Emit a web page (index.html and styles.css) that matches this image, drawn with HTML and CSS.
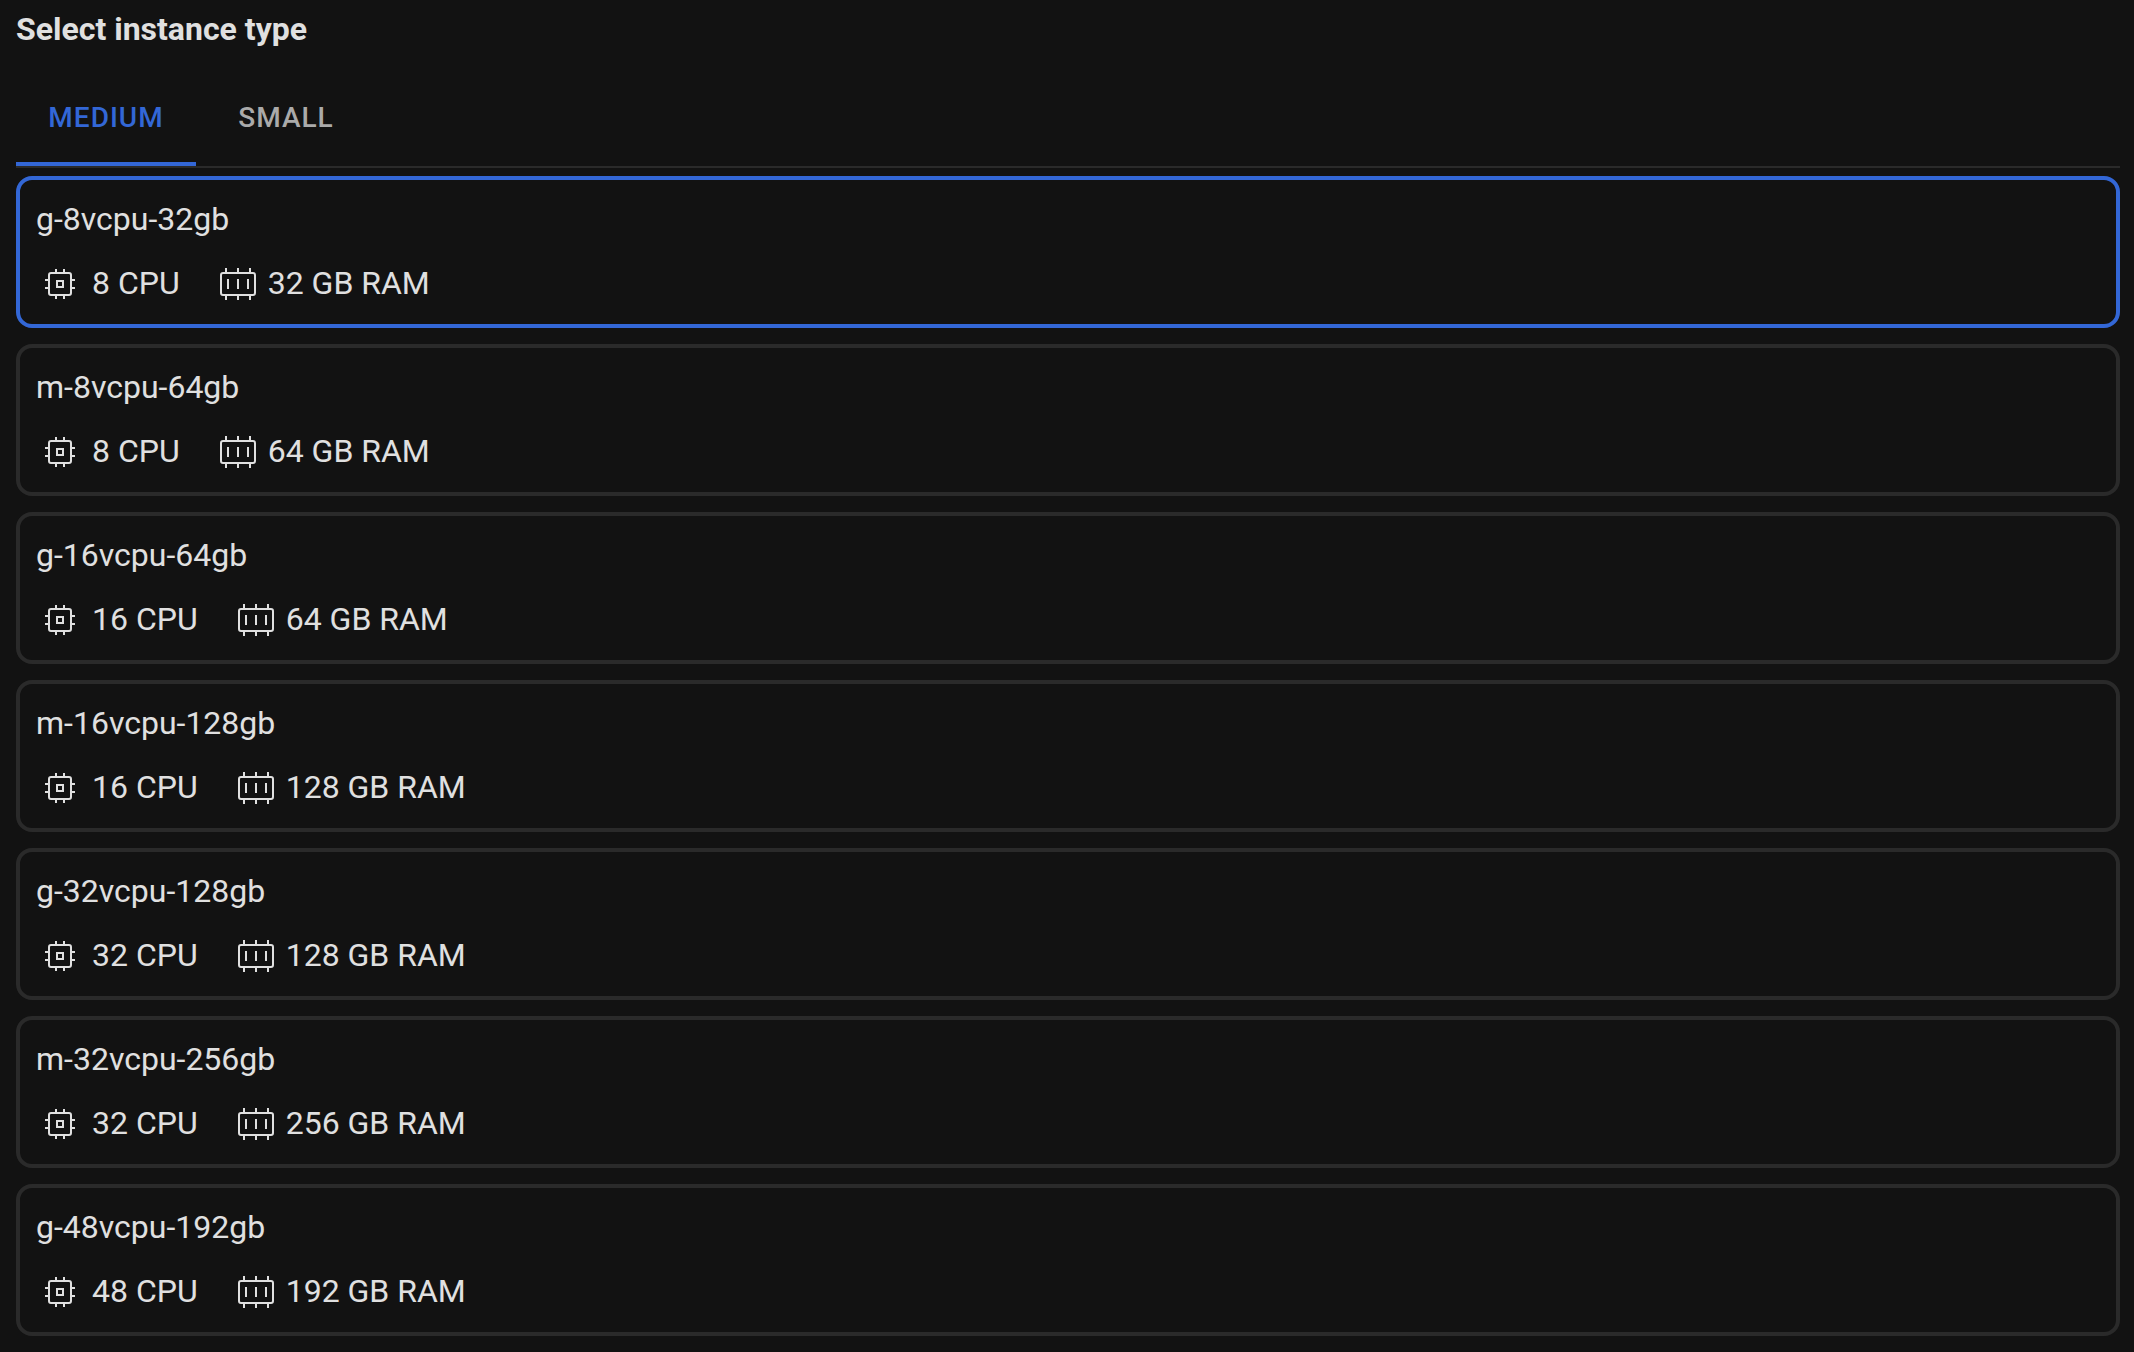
FILE: index.html
```html
<!DOCTYPE html>
<html lang="en">

<head>
  <meta charset="utf-8">
  <meta name="viewport" content="width=device-width, initial-scale=1">
  <title>Select instance type</title>
  <link rel="stylesheet" href="styles.css">
</head>

<body>

  <!-- icon sprite -->
  <svg class="sprite" aria-hidden="true">
    <symbol id="icon-cpu" viewBox="0 0 32 32">
      <rect x="5" y="5" width="22" height="22" rx="2" />
      <rect x="13" y="13" width="6" height="6" />
      <path d="M12 1v3M20 1v3M12 28v3M20 28v3M1 12h3M1 20h3M28 12h3M28 20h3" />
    </symbol>
    <symbol id="icon-ram" viewBox="0 0 36 32">
      <rect x="1" y="5" width="34" height="22" rx="2" />
      <path d="M6 0v4M18 0v4M30 0v4M6 28v4M18 28v4M30 28v4M8 11v10M18 11v10M28 11v10" />
    </symbol>
  </svg>

  <main class="picker">
    <h1 class="title" id="picker-title">Select instance type</h1>

    <div class="tabs" role="tablist">
      <button type="button" class="tab active" role="tab" id="tab-medium" aria-selected="true" aria-controls="panel">Medium</button>
      <button type="button" class="tab" role="tab" id="tab-small" aria-selected="false">Small</button>
    </div>

    <div class="instances" role="tabpanel" id="panel" aria-labelledby="tab-medium">
      <label class="instance">
        <input type="radio" name="instance" value="g-8vcpu-32gb" checked>
        <span class="name">g-8vcpu-32gb</span>
        <span class="specs">
          <span class="spec"><svg class="icon cpu"><use href="#icon-cpu" /></svg>8 CPU</span>
          <span class="spec"><svg class="icon ram"><use href="#icon-ram" /></svg>32 GB RAM</span>
        </span>
      </label>

      <label class="instance">
        <input type="radio" name="instance" value="m-8vcpu-64gb">
        <span class="name">m-8vcpu-64gb</span>
        <span class="specs">
          <span class="spec"><svg class="icon cpu"><use href="#icon-cpu" /></svg>8 CPU</span>
          <span class="spec"><svg class="icon ram"><use href="#icon-ram" /></svg>64 GB RAM</span>
        </span>
      </label>

      <label class="instance">
        <input type="radio" name="instance" value="g-16vcpu-64gb">
        <span class="name">g-16vcpu-64gb</span>
        <span class="specs">
          <span class="spec"><svg class="icon cpu"><use href="#icon-cpu" /></svg>16 CPU</span>
          <span class="spec"><svg class="icon ram"><use href="#icon-ram" /></svg>64 GB RAM</span>
        </span>
      </label>

      <label class="instance">
        <input type="radio" name="instance" value="m-16vcpu-128gb">
        <span class="name">m-16vcpu-128gb</span>
        <span class="specs">
          <span class="spec"><svg class="icon cpu"><use href="#icon-cpu" /></svg>16 CPU</span>
          <span class="spec"><svg class="icon ram"><use href="#icon-ram" /></svg>128 GB RAM</span>
        </span>
      </label>

      <label class="instance">
        <input type="radio" name="instance" value="g-32vcpu-128gb">
        <span class="name">g-32vcpu-128gb</span>
        <span class="specs">
          <span class="spec"><svg class="icon cpu"><use href="#icon-cpu" /></svg>32 CPU</span>
          <span class="spec"><svg class="icon ram"><use href="#icon-ram" /></svg>128 GB RAM</span>
        </span>
      </label>

      <label class="instance">
        <input type="radio" name="instance" value="m-32vcpu-256gb">
        <span class="name">m-32vcpu-256gb</span>
        <span class="specs">
          <span class="spec"><svg class="icon cpu"><use href="#icon-cpu" /></svg>32 CPU</span>
          <span class="spec"><svg class="icon ram"><use href="#icon-ram" /></svg>256 GB RAM</span>
        </span>
      </label>

      <label class="instance">
        <input type="radio" name="instance" value="g-48vcpu-192gb">
        <span class="name">g-48vcpu-192gb</span>
        <span class="specs">
          <span class="spec"><svg class="icon cpu"><use href="#icon-cpu" /></svg>48 CPU</span>
          <span class="spec"><svg class="icon ram"><use href="#icon-ram" /></svg>192 GB RAM</span>
        </span>
      </label>
    </div>
  </main>

</body>

</html>
```

FILE: styles.css
```css
:root {
  --background: #121212;
  --text: #e0e0e0;
  --text-muted: #aaaaaa;
  --primary: #3367d6;
  --divider: #2a2a2a;
}

* {
  box-sizing: border-box;
}

body {
  margin: 0;
  background-color: var(--background);
  color: var(--text);
  font-family: Roboto, "Liberation Sans", sans-serif;
  font-size: 32px;
  line-height: 46px;
}

.sprite {
  display: none;
}

.picker {
  padding: 6px 14px 16px 16px;
}

.title {
  margin: 0 0 18px;
  font-size: 32px;
  font-weight: 700;
}

/*********** Tabs ***********/

.tabs {
  display: flex;
  margin-bottom: 8px;
  border-bottom: 2px solid var(--divider);
}

.tab {
  min-width: 180px;
  height: 96px;
  padding: 2px 32px 0;
  border: none;
  border-bottom: 4px solid transparent;
  background: none;
  color: var(--text-muted);
  font-family: inherit;
  font-size: 28px;
  font-weight: 500;
  letter-spacing: 1px;
  text-transform: uppercase;
  cursor: pointer;
}

.tab.active {
  border-bottom-color: var(--primary);
  color: var(--primary);
}

/*********** Instance cards ***********/

.instances {
  display: flex;
  flex-direction: column;
  gap: 16px;
}

.instance {
  position: relative;
  display: flex;
  flex-direction: column;
  gap: 18px;
  padding: 16px 16px 18px;
  border: 4px solid var(--divider);
  border-radius: 16px;
  cursor: pointer;
}

.instance:has(input:checked) {
  border-color: var(--primary);
}

/* the radio covers the whole card, only the border shows its state */
.instance input {
  position: absolute;
  inset: 0;
  width: 100%;
  height: 100%;
  margin: 0;
  opacity: 0;
  cursor: pointer;
}

.specs {
  display: flex;
  gap: 40px;
  padding-left: 8px;
}

.spec {
  display: flex;
  align-items: center;
}

.icon {
  height: 32px;
  margin-top: 2px;
  fill: none;
  stroke: currentColor;
  stroke-width: 2;
}

.icon.cpu {
  width: 32px;
  margin-right: 16px;
}

.icon.ram {
  width: 36px;
  margin-right: 12px;
}
```
